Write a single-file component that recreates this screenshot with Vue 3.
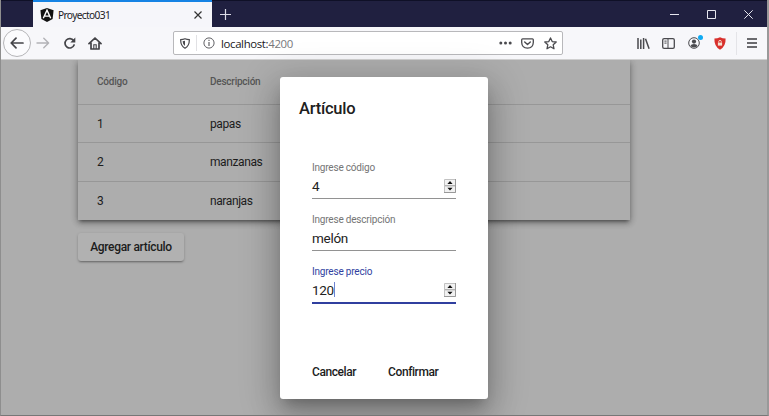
<script setup>
const rows = [
  { code: 1, description: 'papas' },
  { code: 2, description: 'manzanas' },
  { code: 3, description: 'naranjas' },
]
const fields = [
  { label: 'Ingrese código', value: '4', numeric: true },
  { label: 'Ingrese descripción', value: 'melón' },
  { label: 'Ingrese precio', value: '120', numeric: true, focused: true },
]
</script>

<template>
  <div class="window">
    <header class="tabbar">
      <div class="tab">
        <svg class="logo" width="14" height="14" viewBox="0 0 14 14">
          <path d="M7 0L13.6 2.3L12.6 10.9L7 14L1.4 10.9L.4 2.3Z" fill="#111" />
          <path d="M3.3 10.3L7 2.2L10.7 10.3M4.9 8.1H9.1" fill="none" stroke="#fff" stroke-width="1.4" />
        </svg>
        <span class="tab-title">Proyecto031</span>
        <svg class="close" width="8" height="8" viewBox="0 0 8 8"><path d="M.5 .5L7.5 7.5M7.5 .5L.5 7.5" stroke="#333" stroke-width="1.2" /></svg>
      </div>
      <svg class="plus" width="11" height="11" viewBox="0 0 11 11"><path d="M5.5 0V11M0 5.5H11" stroke="#dcdce6" stroke-width="1.2" /></svg>
      <div class="controls">
        <svg width="9" height="9" viewBox="0 0 9 9"><path d="M0 4.5H9" stroke="#e6e6ee" /></svg>
        <svg width="9" height="9" viewBox="0 0 9 9"><path d="M.5 .5H8.5V8.5H.5Z" fill="none" stroke="#e6e6ee" /></svg>
        <svg width="9" height="9" viewBox="0 0 9 9"><path d="M.3 .3L8.7 8.7M8.7 .3L.3 8.7" stroke="#e6e6ee" /></svg>
      </div>
    </header>

    <nav class="toolbar">
      <div class="back">
        <svg width="14" height="12" viewBox="0 0 14 12"><path d="M13 6H1.5M6 1.2L1.2 6L6 10.8" fill="none" stroke="#444448" stroke-width="1.7" stroke-linecap="round" stroke-linejoin="round" /></svg>
      </div>
      <svg class="forward" width="14" height="12" viewBox="0 0 14 12"><path d="M1 6H12.2M7.8 1.2L12.6 6L7.8 10.8" fill="none" stroke="#b2b2b6" stroke-width="1.4" stroke-linecap="round" stroke-linejoin="round" /></svg>
      <svg class="reload" width="13" height="13" viewBox="0 0 13 13">
        <path d="M10.6 3.6A4.7 4.7 0 1 0 11.1 8" fill="none" stroke="#444448" stroke-width="1.7" stroke-linecap="round" />
        <path d="M12.3 .6V5.6H7.3Z" fill="#444448" />
      </svg>
      <svg class="home" width="14" height="13" viewBox="0 0 14 13">
        <path d="M1 6.7L7 1L13 6.7M3 6V12H11V6" fill="none" stroke="#444448" stroke-width="1.7" stroke-linecap="round" stroke-linejoin="round" />
        <path d="M5.8 12V7.7H8.2V12" fill="none" stroke="#444448" stroke-width="1.1" />
      </svg>
      <div class="address">
        <svg class="shield" width="10" height="11" viewBox="0 0 10 11">
          <path d="M.7 1.6Q3 1.5 5 .7Q7 1.5 9.3 1.6Q9.6 7.8 5 10.3Q.4 7.8 .7 1.6Z" fill="none" stroke="#4a4a4e" stroke-width="1.2" />
          <path d="M5 2.7V8.1Q2.6 6.2 2.6 3.2Z" fill="#4a4a4e" />
        </svg>
        <span class="divider"></span>
        <svg class="info" width="12" height="12" viewBox="0 0 12 12">
          <circle cx="6" cy="6" r="5.1" fill="none" stroke="#606064" />
          <path d="M6 5.1V9M6 2.8V4.1" stroke="#606064" stroke-width="1.2" />
        </svg>
        <span class="url">localhost:<span class="port">4200</span></span>
        <svg class="dots" width="13" height="4" viewBox="0 0 13 4"><g fill="#4a4a4e"><circle cx="1.8" cy="2" r="1.5" /><circle cx="6.5" cy="2" r="1.5" /><circle cx="11.2" cy="2" r="1.5" /></g></svg>
        <svg class="pocket" width="13" height="11" viewBox="0 0 13 11">
          <path d="M1.6 .8H11.4Q12.3 .8 12.3 1.7V4.5Q12.1 9.9 6.5 10.2Q.9 9.9 .7 4.5V1.7Q.7 .8 1.6 .8Z" fill="none" stroke="#4a4a4e" stroke-width="1.3" />
          <path d="M3.7 3.9L6.5 6.5L9.3 3.9" fill="none" stroke="#4a4a4e" stroke-width="1.4" stroke-linecap="round" stroke-linejoin="round" />
        </svg>
        <svg class="star" width="13" height="13" viewBox="0 0 13 13"><path d="M6.5 .9L8.2 4.6L12.2 5L9.2 7.8L10 11.8L6.5 9.8L3 11.8L3.8 7.8L.8 5L4.8 4.6Z" fill="none" stroke="#4a4a4e" stroke-width="1.3" stroke-linejoin="round" /></svg>
      </div>
      <svg class="library" width="13" height="11" viewBox="0 0 13 11"><path d="M1 0V11M3.8 1.5V11M6.6 0V11M8.5 .7L12.1 10.7" fill="none" stroke="#4a4a4e" stroke-width="1.5" /></svg>
      <svg class="sidebar" width="13" height="11" viewBox="0 0 13 11">
        <rect x=".7" y=".7" width="11.6" height="9.6" rx="1.4" fill="none" stroke="#4a4a4e" stroke-width="1.3" />
        <path d="M6 1V10M2.4 3.1H4.6M2.4 5.1H4.6" stroke="#4a4a4e" />
      </svg>
      <div class="account">
        <svg width="12" height="12" viewBox="0 0 12 12">
          <circle cx="6" cy="6" r="5.3" fill="none" stroke="#4a4a4e" />
          <circle cx="6" cy="4.6" r="2.1" fill="#4a4a4e" />
          <path d="M2.4 9Q3 7.1 6 7.1Q9 7.1 9.6 9Q8.3 10.4 6 10.4Q3.7 10.4 2.4 9Z" fill="#4a4a4e" />
        </svg>
        <i class="badge"></i>
      </div>
      <svg class="blocker" width="12" height="13" viewBox="0 0 12 13">
        <path d="M6 .2Q8.5 1.5 11.6 1.6Q12 9.5 6 12.8Q0 9.5 .4 1.6Q3.5 1.5 6 .2Z" fill="#d8302c" />
        <rect x="3.9" y="5.6" width="4.2" height="3" fill="#f4e3d3" />
        <path d="M4.7 5.6V4.6Q4.7 3.4 6 3.4Q7.3 3.4 7.3 4.6V5.6" fill="none" stroke="#f4e3d3" stroke-width=".9" />
      </svg>
      <span class="bar-divider"></span>
      <svg class="menu" width="10" height="10" viewBox="0 0 10 10"><path d="M0 1H10M0 5H10M0 9H10" stroke="#3c3c40" stroke-width="1.4" /></svg>
    </nav>

    <main class="page">
      <table class="articles">
        <thead>
          <tr><th class="code">Código</th><th>Descripción</th></tr>
        </thead>
        <tbody>
          <tr v-for="row in rows" :key="row.code">
            <td class="code">{{ row.code }}</td>
            <td>{{ row.description }}</td>
          </tr>
        </tbody>
      </table>
      <button class="add">Agregar artículo</button>
    </main>

    <section class="dialog" role="dialog">
      <h1>Artículo</h1>
      <div class="fields">
        <div v-for="field in fields" :key="field.label" class="field" :class="{ focused: field.focused }">
          <label>{{ field.label }}</label>
          <div class="control">
            <span>{{ field.value }}</span>
            <i v-if="field.focused" class="caret"></i>
            <svg v-if="field.numeric" class="spinner" width="12" height="14" viewBox="0 0 12 14">
              <path d="M.5 .5H11.5V13.5H.5Z" fill="#f2f2f2" stroke="#c2c2c2" />
              <path d="M11.5 0V13.5H0M1 6.8H11" fill="none" stroke="#999" />
              <path d="M6 2.1L8.6 5H3.4ZM6 11.6L8.6 8.7H3.4Z" fill="#111" />
            </svg>
          </div>
        </div>
      </div>
      <footer>
        <button>Cancelar</button>
        <button>Confirmar</button>
      </footer>
    </section>
    <i class="scroll-mark"></i>
  </div>
</template>

<style>
body { margin: 0; overflow: hidden; }
</style>

<style scoped>
* { box-sizing: border-box; }
svg { display: block; flex: none; }
button { border: 0; background: none; font: 500 12px Roboto, sans-serif; color: #1c1c1c; padding: 0; white-space: nowrap; }
.window { position: relative; width: 769px; height: 416px; overflow: hidden; display: flex; flex-direction: column; background: #adadad; font-family: Roboto, sans-serif; border-left: 1px solid #8e8e8e; border-bottom: 1px solid #777; border-right: 2px solid #999; }
.tabbar { height: 27px; flex: none; display: flex; align-items: center; background: #202040; border-top: 1px solid #0f1027; margin: 0 -2px 0 -1px; padding-left: 33px; }
.tab { width: 179px; height: 27px; margin-top: -1px; display: flex; align-items: center; background: #f6f6fa; border-top: 2px solid #1683e4; padding: 0 10px 0 7px; }
.tab-title { font: 10.2px "Noto Sans", sans-serif; letter-spacing: -.65px; color: #202024; margin-left: 4px; }
.close { margin-left: auto; }
.plus { margin-left: 8px; }
.controls { display: flex; gap: 28px; margin-left: auto; margin-right: 16px; }
.toolbar { height: 33px; flex: none; display: flex; align-items: center; background: #f7f7fa; border-bottom: 1px solid #d0d0d0; padding: 0 8px 0 2px; }
.back { width: 28px; height: 28px; border: 1px solid #b5b5b8; border-radius: 50%; display: flex; align-items: center; justify-content: center; background: #fbfbfd; }
.forward { margin-left: 5px; }
.reload { margin-left: 13px; }
.home { margin-left: 12px; }
.address { width: 390px; height: 24px; margin-left: 71px; border: 1px solid #b8b8bb; border-radius: 2px; background: #fff; display: flex; align-items: center; padding: 0 5px 0 6px; }
.divider { width: 1px; height: 16px; background: #e1e1e4; margin: 0 6px; }
.url { margin-left: 6px; font: 11.4px "Open Sans", sans-serif; letter-spacing: -.35px; color: #18181c; }
.port { color: #77777b; }
.dots { margin-left: auto; }
.pocket { margin-left: 9px; }
.star { margin-left: 10px; }
.library { margin-left: 74px; }
.sidebar { margin-left: 12px; }
.account { position: relative; margin-left: 13px; }
.badge { position: absolute; left: 10px; top: -2px; width: 5px; height: 5px; border-radius: 50%; background: #0faaf2; }
.blocker { margin-left: 14px; }
.bar-divider { width: 1px; height: 23px; margin-left: 10px; background: #e4e4e8; }
.menu { margin-left: auto; margin-right: 2px; }
.page { flex: 1; min-height: 0; overflow: hidden; padding-left: 77px; background: #adadad; }
.articles { width: 552px; border-collapse: separate; border-spacing: 0; table-layout: fixed; background: #adadad; box-shadow: 0 3px 3px -2px rgba(0,0,0,.35), 0 3px 6px rgba(0,0,0,.3), 0 1px 8px rgba(0,0,0,.15); }
th { height: 45px; padding: 0 0 1px; text-align: left; font-size: 10px; font-weight: 500; letter-spacing: -.23px; color: #555; border-bottom: 1px solid #979797; }
td { height: 38px; padding: 0; font-size: 12px; letter-spacing: -.4px; color: #1c1c1c; border-bottom: 1px solid #979797; }
tbody tr:nth-child(2) td { height: 39px; }
tbody tr:last-child td { border-bottom: 0; }
.code { width: 132px; padding-left: 19px; }
.add { display: block; width: 106px; height: 28px; margin-top: 13px; border-radius: 3px; letter-spacing: -.32px; background: #b1b1b1; box-shadow: 0 2px 2px -1px rgba(0,0,0,.28), 0 1px 3px rgba(0,0,0,.2); }
.dialog { position: absolute; left: 279px; top: 77px; width: 208px; height: 322px; background: #fff; border-radius: 3px; padding: 22px 32px 0; box-shadow: 0 9px 12px -5px rgba(0,0,0,.22), 0 19px 30px 2px rgba(0,0,0,.14), 0 7px 37px 6px rgba(0,0,0,.18); }
h1 { margin: 0 0 0 -13px; font-size: 16.5px; letter-spacing: -.25px; line-height: 20px; font-weight: 500; color: #202020; }
.fields { display: flex; flex-direction: column; margin-top: 41px; }
.field { height: 52px; }
.field label { display: block; height: 15px; line-height: 15px; font-size: 10px; letter-spacing: -.2px; color: #757575; }
.control { height: 24px; display: flex; align-items: center; font-size: 13.5px; letter-spacing: -.3px; color: #222; border-bottom: 1px solid #929292; padding-bottom: 2px; }
.spinner { margin-left: auto; }
.caret { width: 1px; height: 15px; background: #6f83d2; }
.focused label { color: #303f9f; }
.focused .control { height: 25px; border-bottom: 2px solid #303f9f; }
footer { display: flex; gap: 32px; margin-top: 46px; }
footer button { height: 20px; font-size: 12px; letter-spacing: -.42px; }
.scroll-mark { position: absolute; right: -2px; top: 188px; width: 2px; height: 10px; background: #196da5; }
</style>
